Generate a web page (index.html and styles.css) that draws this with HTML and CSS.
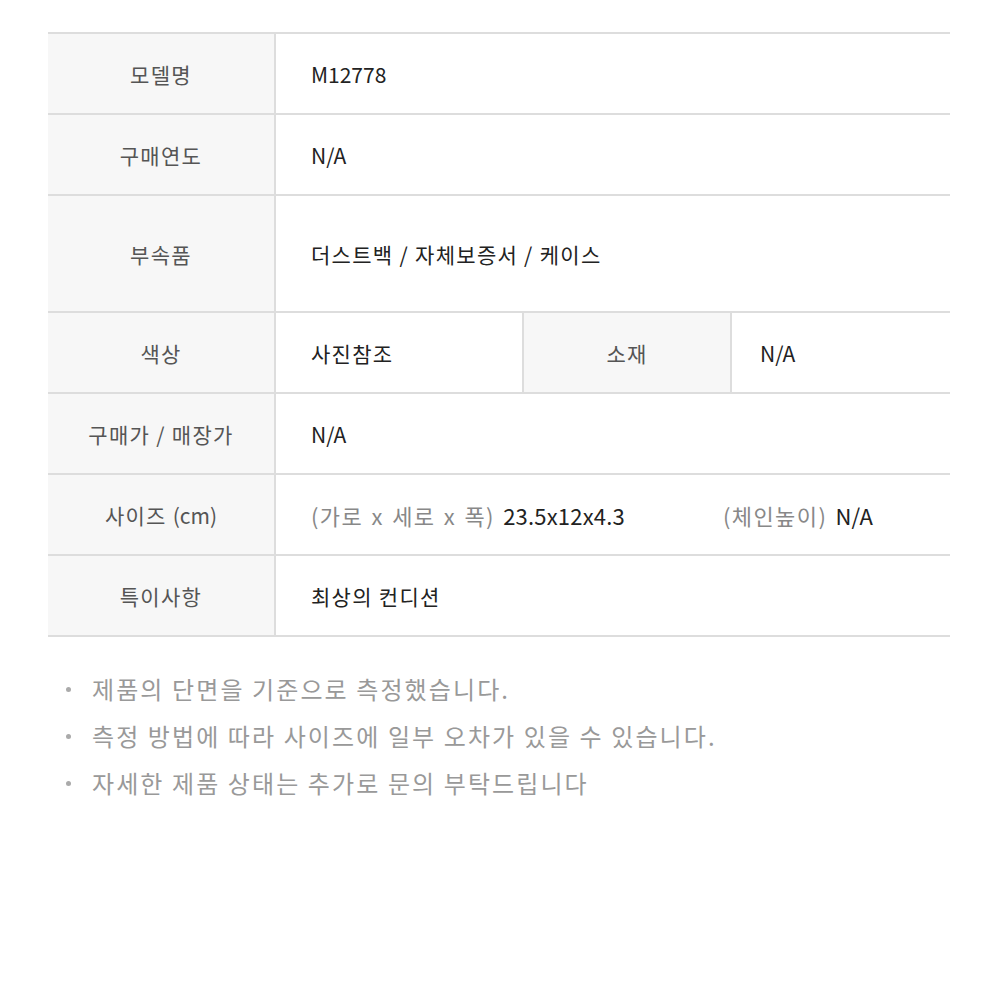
FILE: index.html
```html
<!DOCTYPE html>
<html>
<head>
    <title>상품 정보</title>
    <link rel="stylesheet" href="styles.css">
</head>
<body>
    <div class="container">
        <!-- 상품 정보 표 -->
        <table class="info-table">
            <tr>
                <th>모델명</th>
                <td colspan="3"><span class="en">M12778</span></td>
            </tr>
            <tr>
                <th>구매연도</th>
                <td colspan="3"><span class="en">N/A</span></td>
            </tr>
            <tr class="tall">
                <th>부속품</th>
                <td colspan="3">더스트백 / 자체보증서 / 케이스</td>
            </tr>
            <tr>
                <th>색상</th>
                <td class="half">사진참조</td>
                <th class="sub-th">소재</th>
                <td class="narrow"><span class="en">N/A</span></td>
            </tr>
            <tr>
                <th>구매가 / 매장가</th>
                <td colspan="3"><span class="en">N/A</span></td>
            </tr>
            <tr>
                <th>사이즈 <span class="en">(cm)</span></th>
                <td colspan="3">
                    <div class="size-row">
                        <span class="size-main"><span class="muted">(가로 x 세로 x 폭)</span> <span class="en">23.5x12x4.3</span></span>
                        <span><span class="muted">(체인높이)</span> <span class="en">N/A</span></span>
                    </div>
                </td>
            </tr>
            <tr>
                <th>특이사항</th>
                <td colspan="3">최상의 컨디션</td>
            </tr>
        </table>

        <!-- 안내 문구 -->
        <ul class="notes">
            <li>제품의 단면을 기준으로 측정했습니다.</li>
            <li>측정 방법에 따라 사이즈에 일부 오차가 있을 수 있습니다.</li>
            <li>자세한 제품 상태는 추가로 문의 부탁드립니다</li>
        </ul>
    </div>
</body>
</html>
```

FILE: styles.css
```css
body { margin: 0; font-family: "Noto Sans CJK KR", "Noto Sans", sans-serif; background: #fff; }
.container { padding: 32px 50px 0 48px; }

.info-table { width: 100%; border-collapse: collapse; border-top: 2px solid #ddd; }
.info-table th, .info-table td {
    height: 79px;
    padding: 0;
    border-bottom: 2px solid #ddd;
    font-size: 21px;
    font-weight: normal;
    letter-spacing: 1.3px;
}
.info-table th {
    width: 226px;
    background: #f7f7f7;
    color: #555;
    text-align: center;
    border-right: 2px solid #ddd;
}
.info-table td { color: #222; padding-left: 35px; text-align: left; }
.info-table tr.tall th, .info-table tr.tall td { height: 115px; }
.info-table td.half { width: 211px; border-right: 2px solid #ddd; }
.info-table th.sub-th { width: 206px; }
.info-table td.narrow { padding-left: 28px; }
.en { letter-spacing: 0; }

.size-row { display: flex; font-size: 22px; word-spacing: 2px; }
.size-row .en { letter-spacing: 0.2px; }
.size-main { width: 412px; }
.muted { color: #888; letter-spacing: 1.4px; }

.notes { list-style: none; margin: 28px 0 0 0; padding: 0 0 0 18px; }
.notes li {
    font-size: 24px;
    letter-spacing: 2.1px;
    color: #999;
    line-height: 47px;
    position: relative;
    padding-left: 26px;
}
.notes li::before {
    content: "";
    position: absolute;
    left: 0;
    top: 22px;
    width: 5px;
    height: 5px;
    border-radius: 50%;
    background: #aaa;
}
```
